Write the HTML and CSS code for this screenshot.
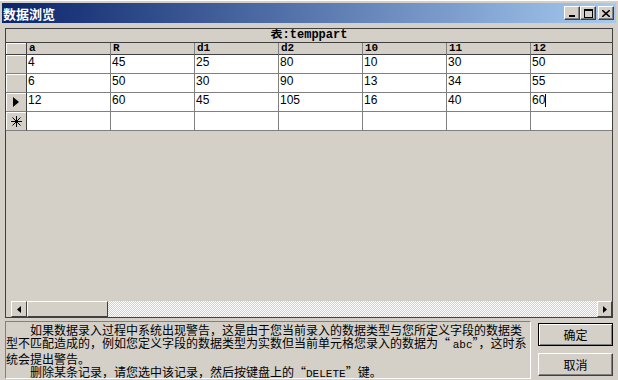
FILE: index.html
```html
<!DOCTYPE html>
<html lang="zh-CN">

<head>
    <meta charset="UTF-8">
    <meta name="viewport" content="width=device-width, initial-scale=1.0">
    <title>数据浏览</title>
    <link rel="stylesheet" href="styles.css">
</head>

<body>

    <div class="window">
        <div class="titlebar">
            <span class="title">数据浏览</span>
            <div class="capButtons">
                <span class="capBtn">
                    <svg width="8" height="7" viewBox="0 0 8 7"><rect x="1" y="5" width="6" height="2" fill="#000"/></svg>
                </span>
                <span class="capBtn">
                    <svg width="9" height="9" viewBox="0 0 9 9"><rect x="0.5" y="0.5" width="8" height="8" fill="none" stroke="#000"/><rect x="0" y="0" width="9" height="2" fill="#000"/></svg>
                </span>
                <span class="capBtn close">
                    <svg width="8" height="7" viewBox="0 0 8 7"><path d="M0 0 L8 7 M8 0 L0 7" stroke="#000" stroke-width="1.6"/></svg>
                </span>
            </div>
        </div>

        <div class="grid">
            <div class="gridCaption">表:temppart</div>

            <div class="gridRows">
                <div class="row head">
                    <div class="sel"></div>
                    <div class="cell">a</div>
                    <div class="cell">R</div>
                    <div class="cell">d1</div>
                    <div class="cell">d2</div>
                    <div class="cell">10</div>
                    <div class="cell">11</div>
                    <div class="cell">12</div>
                </div>
                <div class="row">
                    <div class="sel"></div>
                    <div class="cell">4</div>
                    <div class="cell">45</div>
                    <div class="cell">25</div>
                    <div class="cell">80</div>
                    <div class="cell">10</div>
                    <div class="cell">30</div>
                    <div class="cell">50</div>
                </div>
                <div class="row">
                    <div class="sel"></div>
                    <div class="cell">6</div>
                    <div class="cell">50</div>
                    <div class="cell">30</div>
                    <div class="cell">90</div>
                    <div class="cell">13</div>
                    <div class="cell">34</div>
                    <div class="cell">55</div>
                </div>
                <div class="row">
                    <div class="sel">
                        <svg width="6" height="10" viewBox="0 0 6 10"><polygon points="0,0 6,5 0,10" fill="#000"/></svg>
                    </div>
                    <div class="cell">12</div>
                    <div class="cell">60</div>
                    <div class="cell">45</div>
                    <div class="cell">105</div>
                    <div class="cell">16</div>
                    <div class="cell">40</div>
                    <div class="cell">60<span class="caret"></span></div>
                </div>
                <div class="row">
                    <div class="sel">
                        <svg width="11" height="11" viewBox="0 0 11 11"><path d="M5.5 0 V11 M0 5.5 H11 M1.5 1.5 L9.5 9.5 M9.5 1.5 L1.5 9.5" stroke="#000" stroke-width="1"/></svg>
                    </div>
                    <div class="cell"></div>
                    <div class="cell"></div>
                    <div class="cell"></div>
                    <div class="cell"></div>
                    <div class="cell"></div>
                    <div class="cell"></div>
                    <div class="cell"></div>
                </div>
            </div>

            <div class="hscroll">
                <span class="sbBtn">
                    <svg width="4" height="7" viewBox="0 0 4 7"><polygon points="4,0 0,3.5 4,7" fill="#000"/></svg>
                </span>
                <span class="thumb"></span>
                <span class="track"></span>
                <span class="sbBtn right">
                    <svg width="4" height="7" viewBox="0 0 4 7"><polygon points="0,0 4,3.5 0,7" fill="#000"/></svg>
                </span>
            </div>
        </div>

        <div class="footer">
            <div class="help">
                <p class="para">如果数据录入过程中系统出现警告，这是由于您当前录入的数据类型与您所定义字段的数据类<br>型不匹配造成的，例如您定义字段的数据类型为实数但当前单元格您录入的数据为“ <span class="mono">abc</span>”，这时系<br>统会提出警告。</p>
                <p class="para">删除某条记录，请您选中该记录，然后按键盘上的“<span class="mono">DELETE</span>”键。</p>
            </div>
            <div class="actions">
                <button class="btn default">确定</button>
                <button class="btn">取消</button>
            </div>
        </div>
    </div>

</body>

</html>
```

FILE: styles.css
```css
body {
    margin: 0;
    background-color: #d4d0c8;
    font-family: "Noto Sans CJK SC", "Liberation Sans", sans-serif;
    font-size: 12px;
    color: black;
}

.window {
    width: 618px;
    height: 380px;
    padding: 2px 2px 0 2px;
    box-sizing: border-box;
    border-top: 1px solid #ffffff;
}

.titlebar {
    height: 20px;
    display: flex;
    align-items: center;
    justify-content: space-between;
    background: linear-gradient(to right, #0a246a, #a6caf0);
    padding: 0 2px 0 1px;
}

.title {
    color: white;
    font-weight: bold;
    font-size: 13px;
    line-height: 13px;
}

.capButtons {
    display: flex;
}

.capBtn {
    width: 16px;
    height: 14px;
    box-sizing: border-box;
    background-color: #d4d0c8;
    border-top: 1px solid #ffffff;
    border-left: 1px solid #ffffff;
    border-right: 1px solid #404040;
    border-bottom: 1px solid #404040;
    box-shadow: inset -1px -1px #808080;
    display: flex;
    align-items: center;
    justify-content: center;
}

.capBtn.close {
    margin-left: 2px;
}

.grid {
    margin: 5px 0 0 3px;
    width: 608px;
    height: 290px;
    box-sizing: border-box;
    border: 1px solid #404040;
    display: flex;
    flex-direction: column;
    overflow: hidden;
}

.gridCaption {
    height: 14px;
    box-sizing: border-box;
    border-bottom: 1px solid #404040;
    text-align: center;
    font-family: "Liberation Mono", "Noto Sans CJK SC", monospace;
    font-weight: bold;
    font-size: 12px;
    line-height: 13px;
}

.gridRows {
    flex: 1;
    overflow: hidden;
}

.row {
    display: grid;
    grid-template-columns: 21px repeat(7, 84px);
    height: 19px;
}

.row.head {
    height: 12px;
}

.sel {
    box-sizing: border-box;
    border-right: 1px solid #404040;
    border-bottom: 1px solid #808080;
    box-shadow: inset 1px 1px #ffffff;
    display: flex;
    align-items: center;
    justify-content: center;
}

.head .sel {
    border-bottom-color: #404040;
}

.cell {
    box-sizing: border-box;
    background-color: white;
    border-right: 1px solid #808080;
    border-bottom: 1px solid #808080;
    padding: 1px 0 0 1px;
    font-family: "Liberation Sans", sans-serif;
    font-size: 12px;
    line-height: 13px;
    white-space: nowrap;
}

.head .cell {
    background-color: #d4d0c8;
    border-bottom-color: #404040;
    font-family: "Liberation Mono", monospace;
    font-weight: bold;
    font-size: 11px;
    line-height: 11px;
    padding: 0 0 0 2px;
}

.caret {
    display: inline-block;
    width: 1px;
    height: 13px;
    background-color: black;
    vertical-align: top;
}

.hscroll {
    height: 16px;
    display: flex;
    padding-left: 5px;
}

.sbBtn {
    width: 16px;
    box-sizing: border-box;
    background-color: #d4d0c8;
    border-top: 1px solid #ffffff;
    border-left: 1px solid #ffffff;
    border-right: 1px solid #404040;
    border-bottom: 1px solid #404040;
    display: flex;
    align-items: center;
    justify-content: center;
}

.sbBtn.right {
    width: 15px;
}

.thumb {
    width: 81px;
    box-sizing: border-box;
    background-color: #d4d0c8;
    border-top: 1px solid #ffffff;
    border-left: 1px solid #ffffff;
    border-right: 1px solid #404040;
    border-bottom: 1px solid #404040;
}

.track {
    flex: 1;
    background: repeating-conic-gradient(#ffffff 0 25%, #d4d0c8 0 50%) 0 0 / 2px 2px;
}

.footer {
    display: flex;
    margin: 3px 0 0 3px;
}

.help {
    width: 526px;
    height: 58px;
    box-sizing: border-box;
    border-top: 1px solid #808080;
    border-left: 1px solid #808080;
    border-right: 1px solid #ffffff;
    border-bottom: 1px solid #ffffff;
    padding: 1px 0 0 0;
}

.para {
    margin: 0;
    text-indent: 24px;
    line-height: 13px;
    font-size: 12px;
    white-space: nowrap;
}

.mono {
    font-family: "Liberation Mono", monospace;
    font-size: 11px;
}

.actions {
    display: flex;
    flex-direction: column;
    gap: 7px;
    margin: 2px 0 0 7px;
}

.btn {
    width: 75px;
    height: 23px;
    box-sizing: border-box;
    background-color: #d4d0c8;
    border-top: 1px solid #ffffff;
    border-left: 1px solid #ffffff;
    border-right: 1px solid #404040;
    border-bottom: 1px solid #404040;
    box-shadow: inset -1px -1px #808080;
    font-family: "Noto Sans CJK SC", sans-serif;
    font-size: 12px;
    padding: 0;
    color: black;
}

.btn.default {
    outline: 1px solid #000000;
    outline-offset: -1px;
    border-top-color: #000000;
    border-left-color: #000000;
    box-shadow: inset 1px 1px #ffffff, inset -1px -1px #808080;
}
```
